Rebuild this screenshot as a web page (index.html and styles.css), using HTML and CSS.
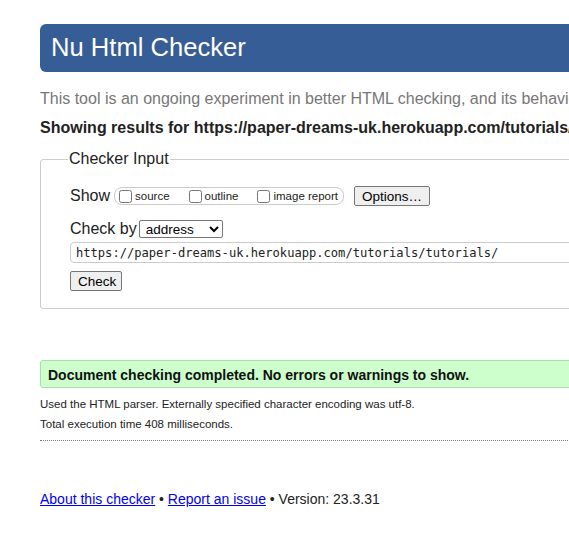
FILE: index.html
```html
<!DOCTYPE html>
<html>
<head>
<meta charset="utf-8">
<title>Nu Html Checker</title>
<link rel="stylesheet" href="styles.css">
</head>
<body>
<div class="page">
  <h1 class="banner">Nu Html Checker</h1>
  <p class="intro">This tool is an ongoing experiment in better HTML checking, and its behavior remains subject to change</p>
  <p class="showing">Showing results for https://paper-dreams-uk.herokuapp.com/tutorials/tutorials/</p>
  <fieldset class="checker">
    <legend>Checker Input</legend>
    <div class="row show-row">
      <span class="label">Show</span>
      <span class="opts">
        <label><input type="checkbox">source</label>
        <label><input type="checkbox">outline</label>
        <label><input type="checkbox">image report</label>
      </span>
      <button class="btn options">Options…</button>
    </div>
    <div class="row by-row">
      <span class="label">Check by</span>
      <select class="sel"><option>address</option></select>
    </div>
    <input class="url" type="text" value="https://paper-dreams-uk.herokuapp.com/tutorials/tutorials/">
    <div><button class="btn check">Check</button></div>
  </fieldset>
  <p class="success">Document checking completed. No errors or warnings to show.</p>
  <p class="details">Used the HTML parser. Externally specified character encoding was utf-8.</p>
  <p class="details">Total execution time 408 milliseconds.</p>
  <hr class="sep">
  <p class="footer"><a href="#">About this checker</a> • <a href="#">Report an issue</a> • Version: 23.3.31</p>
</div>
</body>
</html>
```
FILE: styles.css
```css
html { overflow: hidden; }
body {
  margin: 0;
  font-family: "Liberation Sans", Arial, sans-serif;
  color: #222;
  background: #fff;
}
.page {
  width: 1100px;
  padding: 24px 0 0 40px;
}
.banner {
  margin: 0;
  height: 48px;
  box-sizing: border-box;
  padding: 6px 11px 0;
  background: #365d95;
  color: #fff;
  font-size: 25.6px;
  font-weight: normal;
  line-height: 34px;
  border-radius: 6px 0 0 6px;
}
.intro {
  margin: 18px 0 0;
  font-size: 16px;
  line-height: 18px;
  color: #777;
  white-space: nowrap;
}
.showing {
  margin: 11px 0 0;
  font-size: 16px;
  font-weight: bold;
  line-height: 18px;
  white-space: nowrap;
}
.checker {
  margin: 13px 0 0;
  padding: 8px 29px 17px;
  border: 1px solid #ccc;
  border-radius: 3px;
}
.checker legend {
  padding: 0 1px;
  margin-left: -2px;
  font-size: 16px;
  line-height: 18px;
  color: #222;
}
.row {
  display: flex;
  align-items: center;
}
.label {
  font-size: 16px;
  line-height: 18px;
}
.show-row { margin-top: 10px; }
.opts {
  display: inline-flex;
  align-items: center;
  margin-left: 4px;
  height: 16px;
  padding: 0 5px 0 4px;
  border: 1px solid #ccc;
  border-radius: 8px;
  gap: 19px;
  font-size: 11.5px;
}
.opts label {
  display: inline-flex;
  align-items: center;
}
.opts input {
  margin: 0 3px 0 0;
  width: 13px;
  height: 13px;
}
.btn {
  font-family: "Liberation Sans", Arial, sans-serif;
  background: #efefef;
  border: 1px solid #767676;
  border-radius: 2px;
  color: #000;
  padding: 0 7px;
  height: 20px;
}
.options {
  margin-left: 10px;
  font-size: 13.5px;
  width: 76px;
}
.by-row { margin-top: 14px; }
.sel {
  margin-left: 2px;
  width: 84px;
  height: 18px;
  font-family: "Liberation Sans", Arial, sans-serif;
  font-size: 13.5px;
  border: 1px solid #767676;
  border-radius: 2px;
  padding: 0 2px;
  background: #fff;
  color: #000;
}
.url {
  display: block;
  margin-top: 4px;
  width: 1000px;
  height: 21px;
  box-sizing: border-box;
  border: 1px solid #ccc;
  border-radius: 4px;
  padding: 0 5px;
  font-family: "DejaVu Sans Mono", monospace;
  font-size: 12.1px;
  color: #222;
}
.check {
  margin-top: 8px;
  font-size: 13.5px;
  width: 52px;
}
.success {
  margin: 51px 0 0;
  height: 28px;
  box-sizing: border-box;
  padding: 6px 7px 0;
  background: #ccffcc;
  border: 1px solid #aaddaa;
  border-radius: 3px 0 0 3px;
  font-size: 14px;
  font-weight: bold;
  line-height: 16px;
  color: #111;
  white-space: nowrap;
}
.details {
  margin: 0;
  font-size: 11.5px;
  line-height: 20px;
  color: #222;
  white-space: nowrap;
}
.success + .details { margin-top: 6px; }
.sep {
  margin: 6px 0 0;
  border: 0;
  border-top: 1px dotted #777;
  height: 0;
}
.footer {
  margin: 49px 0 0;
  font-size: 14px;
  line-height: 18px;
  color: #222;
}
.footer a { color: #00e; }
```
